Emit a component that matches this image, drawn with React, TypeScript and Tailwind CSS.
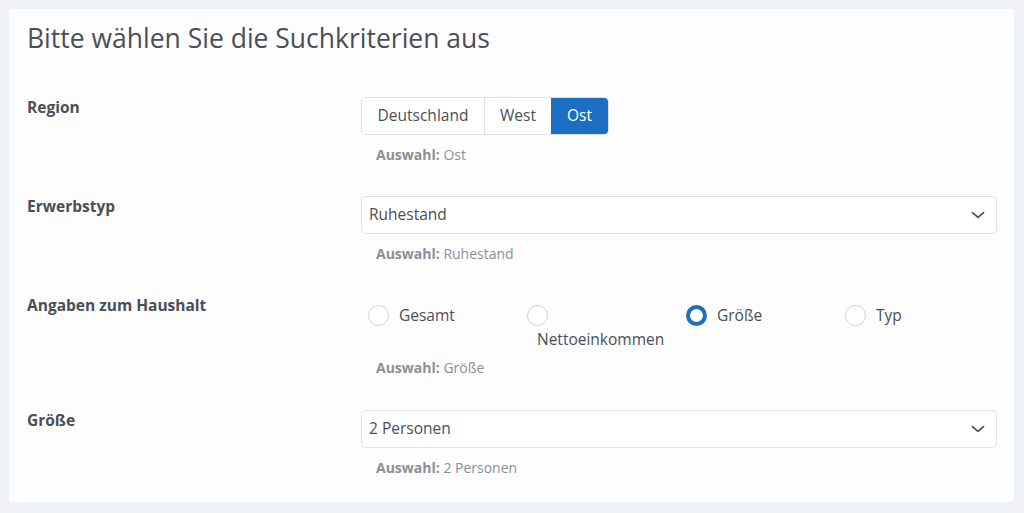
import React from "react";

const font = { fontFamily: '"Open Sans", "Noto Sans", sans-serif' };

function Chevron() {
  return (
    <svg width="14" height="14" viewBox="0 0 14 14" className="text-[#4d5258]">
      <path d="M1.5 4.6 L7 9.4 L12.5 4.6" fill="none" stroke="currentColor" strokeWidth="1.8" strokeLinecap="round" strokeLinejoin="round" />
    </svg>
  );
}

function Auswahl({ value, className = "mt-[10px]" }: { value: string; className?: string }) {
  return (
    <div className={`${className} pl-[15px] text-[14px] leading-5 text-[#8b9097]`}>
      <span className="font-bold">Auswahl:</span> {value}
    </div>
  );
}

function Row({ label, children, className = "mb-[31px]" }: { label: string; children: React.ReactNode; className?: string }) {
  return (
    <div className={`flex ${className}`}>
      <div className="w-[334px] shrink-0 text-[15.5px] leading-5 font-bold text-[#4a4f56]">{label}</div>
      <div className="flex-1">{children}</div>
    </div>
  );
}

function Select({ value }: { value: string }) {
  return (
    <div className="h-[38px] border border-[#dde1e6] rounded-[5px] bg-white flex items-center justify-between pl-[7px] pr-[11px] text-[15.5px] text-[#4a4f56]">
      <span>{value}</span>
      <Chevron />
    </div>
  );
}

function Radio({ label, checked }: { label: string; checked?: boolean }) {
  return (
    <div className="flex flex-wrap items-center content-start pl-[7px] text-[15.5px] leading-6 text-[#4a4f56]">
      <span className="h-6 flex items-center shrink-0">
        {checked ? (
          <span className="w-[21px] h-[21px] rounded-full border-[4px] border-[#1a6fbf] bg-white" />
        ) : (
          <span className="w-[21px] h-[21px] rounded-full border border-[#cdd1d6] bg-white" />
        )}
      </span>
      <span className="ml-[10px]">{label}</span>
    </div>
  );
}

export default function App() {
  return (
    <div style={font} className="w-[1024px] h-[513px] bg-[#eef1f6] pt-[9px] pl-[9px] pr-[10px] overflow-hidden">
      <div className="h-[493px] bg-[#fdfdfe] rounded-[3px] pl-[18px] pr-[17px] pt-[13px]">
        <h1 className="text-[26.5px] leading-8 text-[#4a4f56] font-normal">
          Bitte wählen Sie die Suchkriterien aus
        </h1>
        <div className="mt-[43px]">
          <Row label="Region">
            <div className="inline-flex h-[38px] border border-[#dde1e6] rounded-[5px] text-[15.5px] overflow-hidden">
              <div className="w-[123px] flex items-center justify-center text-[#4a4f56] bg-white border-r border-[#dde1e6]">Deutschland</div>
              <div className="w-[66px] flex items-center justify-center text-[#4a4f56] bg-white">West</div>
              <div className="w-[57px] flex items-center justify-center text-white bg-[#1a6fc2]">Ost</div>
            </div>
            <Auswahl value="Ost" />
          </Row>
          <Row label="Erwerbstyp">
            <Select value="Ruhestand" />
            <Auswahl value="Ruhestand" />
          </Row>
          <Row label="Angaben zum Haushalt" className="mb-[32px]">
            <div className="grid grid-cols-4 items-start pt-[8px]">
              <Radio label="Gesamt" />
              <Radio label="Nettoeinkommen" />
              <Radio label="Größe" checked />
              <Radio label="Typ" />
            </div>
            <Auswahl value="Größe" className="mt-[7px]" />
          </Row>
          <Row label="Größe">
            <Select value="2 Personen" />
            <Auswahl value="2 Personen" />
          </Row>
        </div>
      </div>
    </div>
  );
}
